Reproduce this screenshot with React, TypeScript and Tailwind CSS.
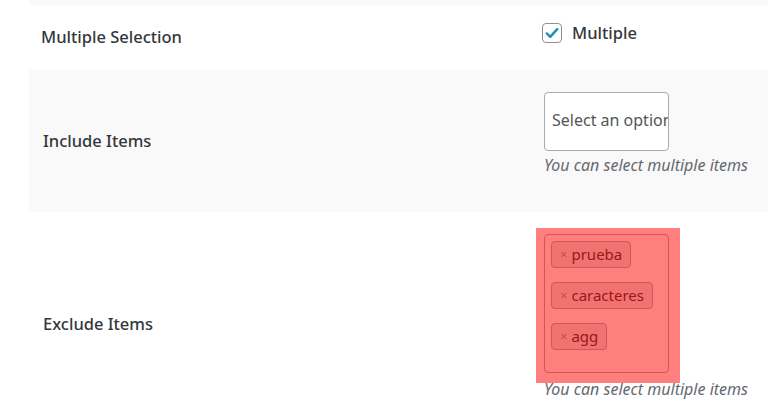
import React from "react";

const font = { fontFamily: '"Noto Sans", "Open Sans", sans-serif' };

function Tag({ label }: { label: string }) {
  return (
    <div className="flex">
      <div className="flex h-[27px] items-center rounded-[4px] border border-[#aaaaaa] bg-[#e4e4e4] pl-[8px] pr-[8px] text-[15px] text-[#333]">
        <span className="mr-[4px] text-[13px] text-[#999]">×</span>
        <span>{label}</span>
      </div>
    </div>
  );
}

export default function App() {
  return (
    <div className="h-[408px] w-full overflow-hidden bg-white text-[#32373c]" style={font}>
      <div className="ml-[29px] h-[5px] bg-[#f9f9f9]" />
      {/* Row 1 */}
      <div className="flex h-[65px] bg-white">
        <div className="flex w-[542px] items-center pl-[41px] text-[16.5px] font-medium">
          Multiple Selection
        </div>
        <div className="flex items-start pt-[16px]">
          <label className="flex items-center gap-[10px] text-[16.5px] font-medium">
            <span className="flex h-[20px] w-[20px] items-center justify-center rounded-[4px] border border-[#8c8f94] bg-white">
              <svg width="16" height="16" viewBox="0 0 20 20">
                <path d="M3.5 10.5 L7.8 14.8 L16.5 5.2" fill="none" stroke="#1e8cbe" strokeWidth="3" strokeLinecap="round" strokeLinejoin="round" />
              </svg>
            </span>
            Multiple
          </label>
        </div>
      </div>
      {/* Row 2 */}
      <div className="ml-[29px] flex h-[142px] bg-[#f9f9f9]">
        <div className="flex w-[515px] items-center pl-[14px] text-[16.5px] font-medium">
          Include Items
        </div>
        <div className="flex flex-col pt-[22px]">
          <div className="flex h-[59px] w-[125px] items-center overflow-hidden whitespace-nowrap rounded-[4px] border border-[#aaaaaa] bg-white pb-[4px] pl-[7px] text-[16px] text-[#555]">
            Select an option
          </div>
          <div className="mt-[4px] text-[16px] italic leading-[20px] text-[#646970]">
            You can select multiple items
          </div>
        </div>
      </div>
      {/* Row 3 */}
      <div className="ml-[29px] flex h-[224px] bg-white">
        <div className="flex w-[515px] items-center pl-[14px] text-[16.5px] font-medium">
          Exclude Items
        </div>
        <div className="flex flex-col pt-[22px]">
          <div className="relative">
            <div className="flex h-[139px] w-[125px] flex-col gap-[14px] rounded-[4px] border border-[#aaaaaa] bg-white pl-[6px] pt-[6px]">
              <Tag label="prueba" />
              <Tag label="caracteres" />
              <Tag label="agg" />
            </div>
            <div className="pointer-events-none absolute left-[-8px] top-[-6px] h-[155px] w-[144px] bg-[rgba(255,0,0,0.5)]" />
          </div>
          <div className="mt-[6px] text-[16px] italic leading-[20px] text-[#646970]">
            You can select multiple items
          </div>
        </div>
      </div>
    </div>
  );
}
